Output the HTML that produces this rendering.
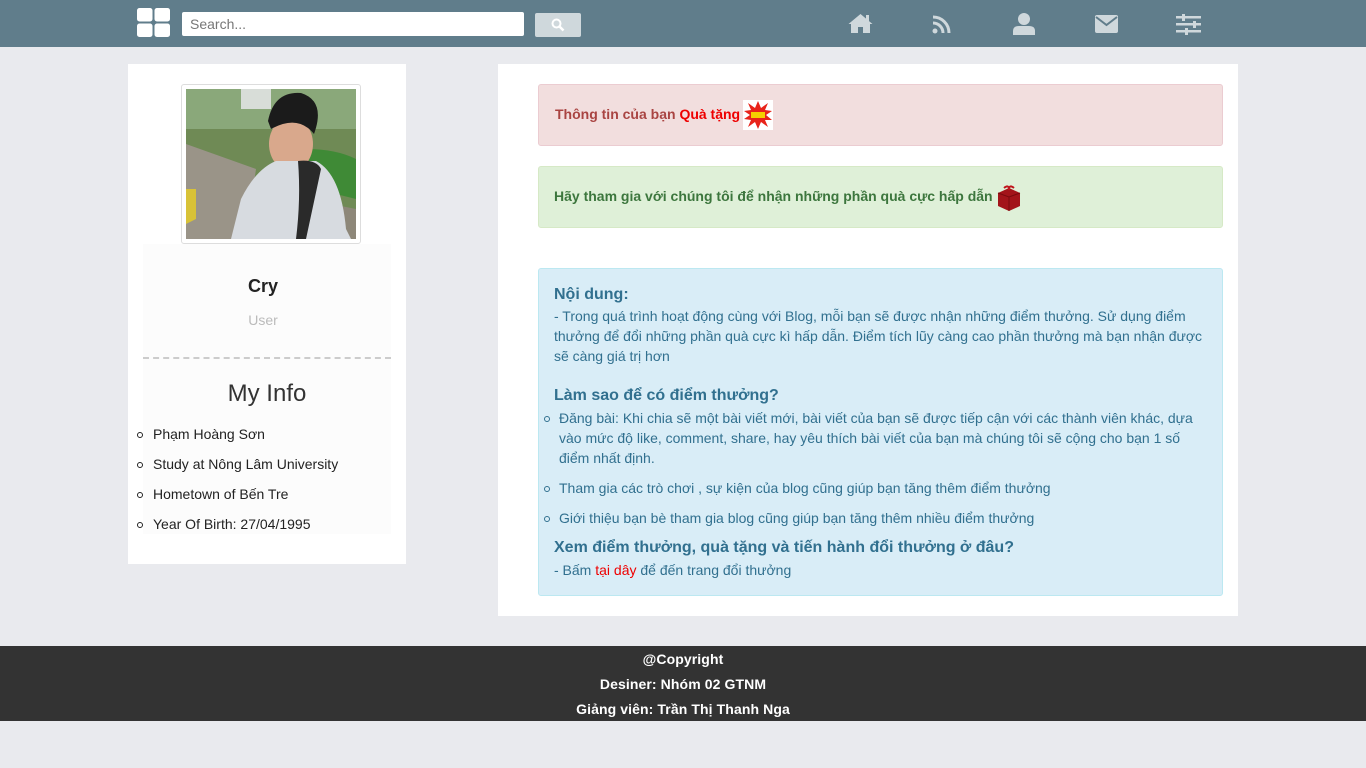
<!DOCTYPE html>
<html><head><meta charset="utf-8">
<style>
*{box-sizing:border-box;margin:0;padding:0}
body{width:1366px;height:768px;background:#e9eaee;font-family:"Liberation Sans",Arial,sans-serif;position:relative;overflow:hidden}
.hdr{position:absolute;left:0;top:0;width:1366px;height:47px;background:#607d8b}
.abs{position:absolute}
.search{left:182px;top:12px;width:342px;height:24px;background:#fff;border-radius:2px;font-size:14px;color:#777;padding:4px 8px}
.sbtn{left:535px;top:13px;width:46px;height:24px;background:#cfd8dc;border-radius:2px}
.left{left:128px;top:64px;width:278px;height:500px;background:#fff}
.inner{left:143px;top:244px;width:248px;height:290px;background:#fcfcfc}
.right{left:498px;top:64px;width:740px;height:552px;background:#fff}
.alert{position:absolute;left:538px;width:685px;border-radius:3px;font-size:14px;font-weight:bold}
ul.c{list-style:none}
ul.c li{position:relative}
ul.c li:before{content:"";position:absolute;width:4px;height:4px;border:1px solid currentColor;border-radius:50%}
ul.l li:before{left:-16px;top:6px}
ul.b li:before{left:-15px;top:8px}
.foot{left:0;top:646px;width:1366px;height:75px;background:#333;color:#fff;font-weight:bold;font-size:14px;text-align:center;letter-spacing:.1px}
</style></head><body>
<div class="hdr"></div>
<svg class="abs" style="left:137px;top:8px" width="33" height="29"><rect x="0" y="0" width="15.5" height="13.5" rx="2.5" fill="#fff"/><rect x="17.5" y="0" width="15.5" height="13.5" rx="2.5" fill="#fff"/><rect x="0" y="15.5" width="15.5" height="13.5" rx="2.5" fill="#fff"/><rect x="17.5" y="15.5" width="15.5" height="13.5" rx="2.5" fill="#fff"/></svg>
<div class="abs search">Search...</div>
<div class="abs sbtn"><svg style="position:absolute;left:16px;top:5px" width="14" height="14"><circle cx="5.5" cy="5.5" r="4" stroke="#fff" stroke-width="2" fill="none"/><line x1="8.5" y1="8.5" x2="12.5" y2="12.5" stroke="#fff" stroke-width="2.5"/></svg></div>
<svg class="abs" style="left:848px;top:13px" width="25" height="21" fill="#cfd8dc"><path d="M12.5 1 L0.5 11 L3 11 L3 20 L10 20 L10 14 L15 14 L15 20 L22 20 L22 11 L24.5 11 Z"/><rect x="18" y="2" width="3" height="6"/></svg>
<svg class="abs" style="left:932px;top:14px" width="21" height="20" fill="none" stroke="#cfd8dc" stroke-width="3"><circle cx="3" cy="17" r="2.5" fill="#cfd8dc" stroke="none"/><path d="M1 9 A10 10 0 0 1 11 19"/><path d="M1 3 A16 16 0 0 1 17 19"/></svg>
<svg class="abs" style="left:1013px;top:13px" width="22" height="22" fill="#cfd8dc"><circle cx="11" cy="6" r="6"/><path d="M0 22 L0 18 Q0 13 6 13 L16 13 Q22 13 22 18 L22 22 Z"/></svg>
<svg class="abs" style="left:1095px;top:15px" width="23" height="18"><rect x="0" y="0" width="23" height="18" rx="2" fill="#cfd8dc"/><path d="M1 2 L11.5 10 L22 2" stroke="#607d8b" stroke-width="2" fill="none"/></svg>
<svg class="abs" style="left:1176px;top:14px" width="25" height="21" fill="#cfd8dc"><rect x="0" y="2" width="25" height="2.5"/><rect x="0" y="9" width="25" height="2.5"/><rect x="0" y="16" width="25" height="2.5"/><rect x="6" y="0" width="3" height="7"/><rect x="17" y="7" width="3" height="7"/><rect x="9" y="14" width="3" height="7"/></svg>

<div class="abs left"></div>
<div class="abs inner"></div>
<div class="abs" style="left:181px;top:84px;width:180px;height:160px;border:1px solid #ddd;border-radius:3px;background:#fff;padding:4px">
<svg width="170" height="150" viewBox="0 0 170 150">
<rect width="170" height="150" fill="#6f8a55"/>
<rect width="170" height="40" fill="#8aa87a"/>
<rect x="55" y="0" width="30" height="20" fill="#d8ddd8"/>
<path d="M0 55 L70 80 L60 150 L0 150Z" fill="#9a9488"/>
<path d="M120 110 L170 120 L170 150 L120 150Z" fill="#8d8779"/>
<path d="M120 60 Q150 60 170 70 L170 110 L130 100Z" fill="#3f8a36"/>
<ellipse cx="105" cy="55" rx="22" ry="27" fill="#d9a88c"/>
<path d="M82 32 Q88 2 115 4 Q140 12 128 45 Q112 25 85 40Z" fill="#1b1b1b"/>
<path d="M45 150 L55 110 Q70 80 90 72 L130 72 Q155 85 160 140 L165 150Z" fill="#d7dbe0"/>
<path d="M112 72 Q130 70 135 80 L120 150 L110 150 Q115 110 112 72Z" fill="#2a2a2a"/>
<path d="M0 100 L10 100 L10 130 L0 135Z" fill="#d8c237"/>
</svg></div>
<div class="abs" style="left:143px;top:276px;width:240px;text-align:center;font-size:18px;font-weight:bold;color:#222">Cry</div>
<div class="abs" style="left:143px;top:312px;width:240px;text-align:center;font-size:14px;color:#bbb">User</div>
<div class="abs" style="left:143px;top:357px;width:248px;border-top:2px dashed #ccc"></div>
<div class="abs" style="left:143px;top:380px;width:248px;text-align:center;font-size:24px;color:#333">My Info</div>
<ul class="c l abs" style="left:153px;top:426px;font-size:14px;color:#222">
<li style="height:30px">Phạm Hoàng Sơn</li>
<li style="height:30px">Study at Nông Lâm University</li>
<li style="height:30px">Hometown of Bến Tre</li>
<li style="height:30px">Year Of Birth: 27/04/1995</li>
</ul>

<div class="abs right"></div>
<div class="alert" style="top:84px;height:62px;background:#f2dede;border:1px solid #ebccd1;color:#a94442;padding:21px 16px">Thông tin của bạn <span style="color:#e00">Quà tặng</span>
<svg style="position:absolute;left:204px;top:15px" width="30" height="30"><rect width="30" height="30" fill="#fff"/><polygon points="15,1 18,8 25,3 22,10 29,11 23,15 29,20 22,20 25,27 18,22 15,29 12,22 5,27 8,20 1,19 7,15 1,11 8,10 5,3 12,8" fill="#e8231a"/><rect x="8" y="12" width="14" height="6" fill="#f5d000"/></svg></div>
<div class="alert" style="top:166px;height:62px;background:#dff0d8;border:1px solid #d6e9c6;color:#3c763d;padding:21px 15px">Hãy tham gia với chúng tôi để nhận những phần quà cực hấp dẫn
<svg style="position:absolute;left:456px;top:17px" width="28" height="28"><path d="M3 9 L14 4 L25 9 L25 22 L14 27 L3 22Z" fill="#a3141a"/><path d="M3 9 L14 13 L25 9" stroke="#7a0a0e" fill="none"/><line x1="14" y1="13" x2="14" y2="27" stroke="#7a0a0e"/><path d="M9 4 Q14 0 14 6 Q14 0 19 4" stroke="#c0151c" stroke-width="2" fill="none"/></svg></div>

<div class="abs" style="left:538px;top:268px;width:685px;height:328px;background:#d9edf7;border:1px solid #bce8f1;border-radius:3px;color:#31708f;font-size:14px;line-height:20px">
<div style="position:absolute;left:15px;top:16px;font-size:16px;font-weight:bold">Nội dung:</div>
<div style="position:absolute;left:15px;top:37px;width:660px">- Trong quá trình hoạt động cùng với Blog, mỗi bạn sẽ được nhận những điểm thưởng. Sử dụng điểm thưởng để đổi những phần quà cực kì hấp dẫn. Điểm tích lũy càng cao phần thưởng mà bạn nhận được sẽ càng giá trị hơn</div>
<div style="position:absolute;left:15px;top:117px;font-size:16px;font-weight:bold">Làm sao để có điểm thưởng?</div>
<ul class="c b" style="position:absolute;left:20px;top:139px;width:650px">
<li style="margin-bottom:10px">Đăng bài: Khi chia sẽ một bài viết mới, bài viết của bạn sẽ được tiếp cận với các thành viên khác, dựa vào mức độ like, comment, share, hay yêu thích bài viết của bạn mà chúng tôi sẽ cộng cho bạn 1 số điểm nhất định.</li>
<li style="margin-bottom:10px">Tham gia các trò chơi , sự kiện của blog cũng giúp bạn tăng thêm điểm thưởng</li>
<li>Giới thiệu bạn bè tham gia blog cũng giúp bạn tăng thêm nhiều điểm thưởng</li>
</ul>
<div style="position:absolute;left:15px;top:269px;font-size:16px;font-weight:bold">Xem điểm thưởng, quà tặng và tiến hành đổi thưởng ở đâu?</div>
<div style="position:absolute;left:15px;top:291px">- Bấm <span style="color:#e00">tại dây</span> để đến trang đổi thưởng</div>
</div>

<div class="abs foot"><div style="position:absolute;top:5px;width:100%">@Copyright</div><div style="position:absolute;top:30px;width:100%">Desiner: Nhóm 02 GTNM</div><div style="position:absolute;top:55px;width:100%">Giảng viên: Trần Thị Thanh Nga</div></div>
</body></html>
